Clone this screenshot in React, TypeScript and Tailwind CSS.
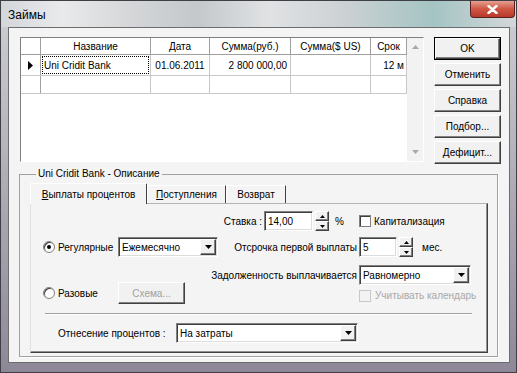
import React from 'react';

const sunken =
  'bg-white border border-t-[#808080] border-l-[#808080] border-r-white border-b-white shadow-[inset_1px_1px_0_#404040,inset_-1px_-1px_0_#dcdcdc]';
const raised =
  'bg-[#f1f1f1] border border-t-white border-l-white border-r-[#404040] border-b-[#404040] shadow-[inset_-1px_-1px_0_#808080]';

function Arrow({ down = true, color = '#000', w = 7 }: { down?: boolean; color?: string; w?: number }) {
  const h = Math.ceil(w / 2);
  const pts = down ? `0,0 ${w},0 ${w / 2},${h}` : `0,${h} ${w},${h} ${w / 2},0`;
  return (
    <svg width={w} height={h} viewBox={`0 0 ${w} ${h}`}>
      <polygon points={pts} fill={color} />
    </svg>
  );
}

function Combo({ value, w }: { value: string; w: string }) {
  return (
    <div className={`${sunken} ${w} h-[20px] flex items-center pr-[1px]`}>
      <span className="flex-1 pl-[3px] truncate">{value}</span>
      <div className={`${raised} w-[16px] h-[16px] flex items-center justify-center`}>
        <Arrow />
      </div>
    </div>
  );
}

function Spin() {
  return (
    <div className="ml-[2px] w-[14px] h-[20px] flex flex-col">
      <div className={`${raised} flex-1 flex items-center justify-center`}>
        <Arrow down={false} w={5} />
      </div>
      <div className={`${raised} flex-1 flex items-center justify-center`}>
        <Arrow w={5} />
      </div>
    </div>
  );
}

function Radio({ checked = false }: { checked?: boolean }) {
  return (
    <div className="w-[12px] h-[12px] shrink-0 rounded-full border border-[#808080] bg-white shadow-[inset_1px_1px_0_#404040] flex items-center justify-center">
      {checked && <div className="w-[4px] h-[4px] rounded-full bg-black" />}
    </div>
  );
}

function Check({ disabled = false }: { disabled?: boolean }) {
  return (
    <div
      className={`w-[12px] h-[12px] shrink-0 border ${
        disabled ? 'border-[#c8c8c8] bg-[#f3f3f3]' : 'border-[#808080] bg-white shadow-[inset_1px_1px_0_#404040]'
      }`}
    />
  );
}

function Btn({ label, def = false }: { label: string; def?: boolean }) {
  return (
    <div className={`h-[23px] ${def ? 'border border-black' : ''}`}>
      <div className={`${raised} h-full flex items-center justify-center`}>{label}</div>
    </div>
  );
}

const cols = [
  { w: 'w-[110px]', title: 'Название' },
  { w: 'w-[59px]', title: 'Дата' },
  { w: 'w-[81px]', title: 'Сумма(руб.)' },
  { w: 'w-[80px]', title: 'Сумма($ US)' },
  { w: 'w-[36px]', title: 'Срок' },
];

export default function App() {
  return (
    <div className="w-[517px] h-[373px] flex flex-col overflow-hidden border border-[#3f3f46] bg-[linear-gradient(180deg,#cdd0d4_0%,#b5b3bb_40%,#8e8798_100%)] font-['Liberation_Sans',Arial,sans-serif] text-[10px] text-black">
      {/* Title bar */}
      <div className="h-[26px] flex items-start justify-between bg-[linear-gradient(90deg,#d3d6d9_0%,#e9eaec_12%,#d6d8da_24%,#c4c8cb_38%,#e0e2e4_52%,#cdd2d4_66%,#a4c4c3_84%,#d4d7da_100%)]">
        <span className="pl-[7px] pt-[7px] text-[12px] leading-[14px]">Займы</span>
        <div className="mr-[1px] w-[45px] h-[17px] rounded-b-[4px] border border-t-0 border-[#5a2020] bg-[linear-gradient(180deg,#e6a092_0%,#cf5643_50%,#b8382a_100%)] flex items-center justify-center">
          <svg width="11" height="9" viewBox="0 0 11 9">
            <path d="M1.5 1 L9.5 8 M9.5 1 L1.5 8" stroke="#fff" strokeWidth="2.4" strokeLinecap="round" />
          </svg>
        </div>
      </div>

      {/* Client area */}
      <div className="flex-1 ml-[7px] mr-[6px] mb-[9px] border border-[#6d6d6d] bg-[#f4f4f4] flex flex-col">
        {/* top: grid + buttons */}
        <div className="flex pl-[11px] pt-[9px] h-[137px]">
          <div className="w-[404px] h-[125px] border border-t-[#808080] border-l-[#808080] border-r-white border-b-white bg-white flex">
            <div className="w-[386px] flex flex-col">
              <div className="flex h-[17px] border-b border-[#a0a0a0]">
                <div className="w-[20px] border-r border-[#a0a0a0]" />
                {cols.map((c) => (
                  <div key={c.title} className={`${c.w} border-r border-[#a0a0a0] flex items-center justify-center`}>
                    {c.title}
                  </div>
                ))}
              </div>
              <div className="flex h-[21px] border-b border-[#c8c8c8]">
                <div className="w-[20px] border-r border-[#a0a0a0] flex items-center justify-center">
                  <svg width="5" height="9" viewBox="0 0 5 9">
                    <polygon points="0,0 5,4.5 0,9" fill="#000" />
                  </svg>
                </div>
                <div className="w-[110px] border-r border-[#c8c8c8] p-[1px]">
                  <div className="h-full border border-dotted border-black flex items-center pl-[1px]">Uni Cridit Bank</div>
                </div>
                <div className="w-[59px] border-r border-[#c8c8c8] flex items-center justify-center">01.06.2011</div>
                <div className="w-[81px] border-r border-[#c8c8c8] flex items-center justify-end pr-[3px]">2 800 000,00</div>
                <div className="w-[80px] border-r border-[#c8c8c8]" />
                <div className="w-[36px] border-r border-[#c8c8c8] flex items-center justify-end pr-[2px]">12 м</div>
              </div>
              <div className="flex h-[18px] border-b border-[#c8c8c8]">
                <div className="w-[20px] border-r border-[#a0a0a0]" />
                {cols.map((c) => (
                  <div key={c.title} className={`${c.w} border-r border-[#c8c8c8]`} />
                ))}
              </div>
            </div>
            <div className="w-[16px] bg-[#f2f2f2] flex flex-col items-center justify-between pt-[7px] pb-[7px]">
              <Arrow down={false} color="#a8a8a8" w={7} />
              <Arrow color="#a8a8a8" w={7} />
            </div>
          </div>
          <div className="ml-[10px] w-[67px] flex flex-col gap-[3px]">
            <Btn label="OK" def />
            <Btn label="Отменить" />
            <Btn label="Справка" />
            <Btn label="Подбор..." />
            <Btn label="Дефицит..." />
          </div>
        </div>

        {/* Group box */}
        <fieldset className="ml-[10px] mt-[3px] w-[479px] h-[189px] border border-[#a0a0a0] shadow-[1px_1px_0_white] pl-[10px] pr-[9px]">
          <legend className="ml-[6px] px-[2px] leading-[12px]">Uni Cridit Bank - Описание</legend>
          <div className="mt-[3px] h-[20px] flex items-end">
            <div className="relative z-10 w-[117px] h-[21px] -mb-px bg-[#f4f4f4] border border-b-0 border-t-white border-l-white border-r-[#404040] rounded-t-[2px] flex items-center justify-center">
              <span>
                <span className="underline">В</span>ыплаты процентов
              </span>
            </div>
            <div className="w-[79px] h-[18px] bg-[#f4f4f4] border border-b-0 border-t-white border-l-white border-r-[#404040] flex items-center justify-center">
              <span>
                <span className="underline">П</span>оступления
              </span>
            </div>
            <div className="w-[60px] h-[18px] bg-[#f4f4f4] border border-b-0 border-t-white border-l-white border-r-[#404040] flex items-center justify-center">
              Возврат
            </div>
          </div>
          <div className="h-[150px] border border-t-[#b4b4b4] border-l-[#e0e0e0] border-r-[#404040] border-b-[#404040] shadow-[inset_-1px_-1px_0_#909090] flex flex-col pt-[7px]">
            {/* Row 1 */}
            <div className="flex items-center h-[20px]">
              <div className="w-[233px] text-right pr-[2px]">Ставка :</div>
              <div className={`${sunken} w-[49px] h-[20px] flex items-center pl-[3px]`}>14,00</div>
              <Spin />
              <div className="w-[30px] pl-[6px]">%</div>
              <Check />
              <span className="ml-[3px]">Капитализация</span>
            </div>
            {/* Row 2 */}
            <div className="flex items-center h-[20px] mt-[6px] pl-[12px]">
              <Radio checked />
              <div className="ml-[3px] w-[60px]">Регулярные</div>
              <Combo value="Ежемесячно" w="w-[100px]" />
              <div className="w-[141px] text-right pr-[2px]">Отсрочка первой выплаты</div>
              <div className={`${sunken} w-[38px] h-[20px] flex items-center pl-[3px]`}>5</div>
              <Spin />
              <span className="ml-[9px]">мес.</span>
            </div>
            {/* Row 3 */}
            <div className="flex items-center h-[20px] mt-[8px]">
              <div className="w-[328px] text-right pr-[2px]">Задолженность выплачивается</div>
              <Combo value="Равномерно" w="w-[112px]" />
            </div>
            {/* Row 4 */}
            <div className="flex items-center h-[22px] -mt-[3px] pl-[12px]">
              <Radio />
              <div className="ml-[3px] w-[60px]">Разовые</div>
              <div className={`${raised} w-[67px] h-[22px] flex items-center justify-center text-[#a0a0a0]`}>Схема...</div>
              <div className="w-[174px]" />
              <div className="self-end mb-[1px] flex items-center">
                <Check disabled />
                <span className="ml-[4px] text-[#a8a8a8]">Учитывать календарь</span>
              </div>
            </div>
            {/* Separator */}
            <div className="ml-[14px] mt-[9px] w-[427px] h-[2px] border-t border-[#a0a0a0] border-b border-b-white" />
            {/* Row 5 */}
            <div className="flex items-center h-[20px] mt-[8px] pl-[27px]">
              <div className="w-[118px]">Отнесение процентов :</div>
              <Combo value="На затраты" w="w-[182px]" />
            </div>
          </div>
        </fieldset>
      </div>
    </div>
  );
}
